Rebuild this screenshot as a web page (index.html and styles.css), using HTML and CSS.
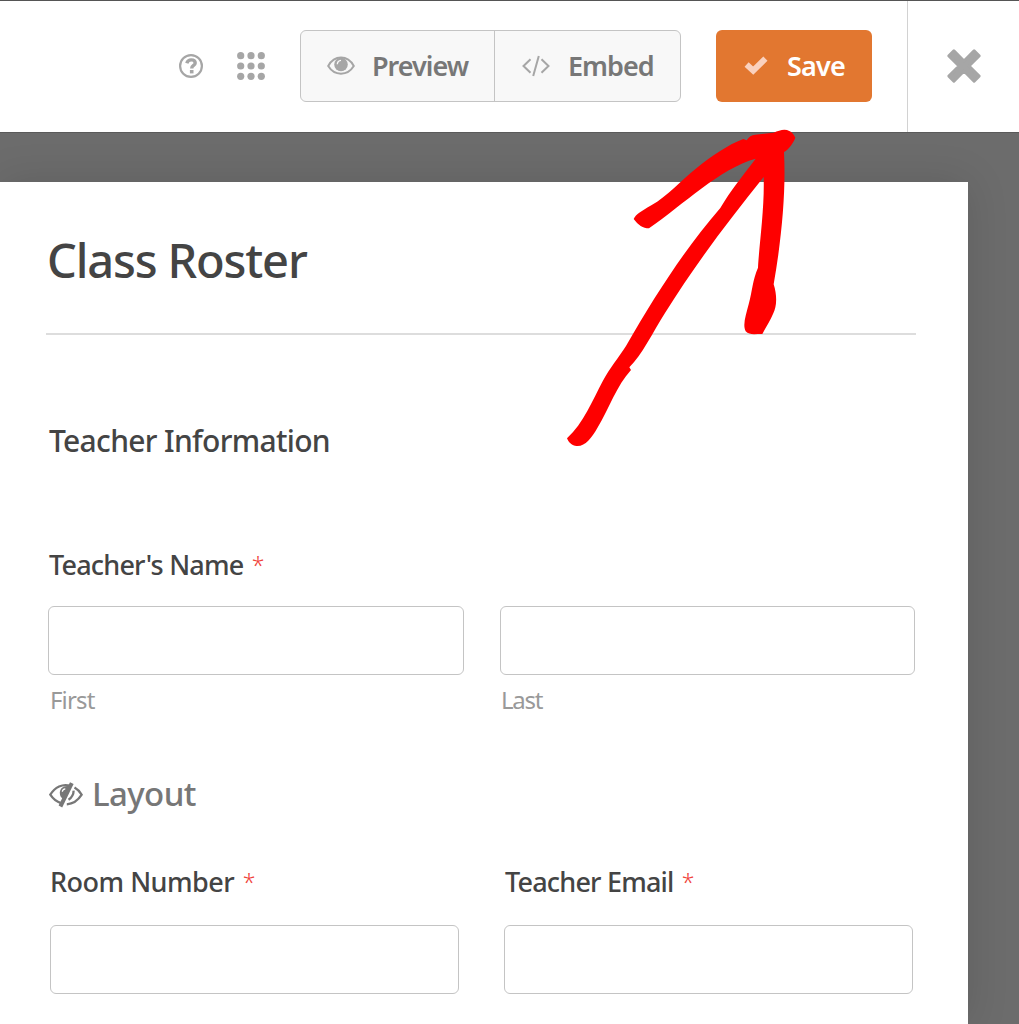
FILE: index.html
```html
<!DOCTYPE html>
<html lang="en">
<head>
<meta charset="utf-8">
<title>Class Roster</title>
<link rel="stylesheet" href="styles.css">
</head>
<body>
<header class="toolbar">
  <div class="actions">
    <svg class="icon-help" viewBox="0 0 26 26"><circle cx="13" cy="13" r="10.9" fill="none" stroke="#a6a6a6" stroke-width="2.200"/><path d="M8.800 10.300C9.500 8 11 6.900 13.200 6.900C15.800 6.900 17.200 8.100 17.200 10C17.200 12.600 13.700 12.400 13.700 15.400" fill="none" stroke="#a6a6a6" stroke-width="3.400"/><rect x="11.900" y="17" width="3.600" height="3.400" fill="#a6a6a6"/></svg>
    <svg class="icon-grid" viewBox="0 0 28 28" fill="#a6a6a6"><circle cx="3.700" cy="3.700" r="3.600"/><circle cx="14" cy="3.700" r="3.600"/><circle cx="24.300" cy="3.700" r="3.600"/><circle cx="3.700" cy="14" r="3.600"/><circle cx="14" cy="14" r="3.600"/><circle cx="24.300" cy="14" r="3.600"/><circle cx="3.700" cy="24.300" r="3.600"/><circle cx="14" cy="24.300" r="3.600"/><circle cx="24.300" cy="24.300" r="3.600"/></svg>
    <div class="group">
      <button class="btn preview"><svg class="icon-eye" viewBox="0 0 28 20"><path d="M1.200 10C7.500-1.200 20.500-1.200 26.800 10C20.500 20.200 7.500 20.200 1.200 10Z" fill="none" stroke="#a6a6a6" stroke-width="2"/><circle cx="14" cy="8.500" r="6.800" fill="#a6a6a6"/><path d="M10.300 8.200C10.500 6 11.800 4.600 14 4.400" fill="none" stroke="#f8f8f8" stroke-width="1.300"/></svg><span>Preview</span></button>
      <button class="btn embed"><svg class="icon-code" viewBox="0 0 28 22" fill="none" stroke="#a6a6a6" stroke-width="2"><path d="M8.500 4.200L1.500 11L8.500 17.800M19.500 4.200L26.500 11L19.500 17.800M16.800 1L11.200 21"/></svg><span>Embed</span></button>
    </div>
    <button class="save"><svg class="icon-check" viewBox="0 0 24 19"><path d="M2.600 8.500L9.200 14.600L21.400 2.700" fill="none" stroke="#fad1be" stroke-width="6"/></svg><span>Save</span></button>
  </div>
  <button class="close"><svg class="icon-close" viewBox="0 0 34 34"><path d="M1.900 6.900L6.900 1.900L17 12L27.100 1.900L32.100 6.900L22 17L32.100 27.100L27.100 32.100L17 22L6.900 32.100L1.900 27.100L12 17Z" fill="#a6a6a6" stroke="#a6a6a6" stroke-width="3" stroke-linejoin="round"/></svg></button>
</header>
<main class="form">
  <h1 class="title">Class Roster</h1>
  <h2 class="section">Teacher Information</h2>
  <div class="label name">Teacher's Name <span class="star">*</span></div>
  <div class="names">
    <div><div class="input"></div><div class="sub">First</div></div>
    <div><div class="input"></div><div class="sub last">Last</div></div>
  </div>
  <div class="layout"><svg class="icon-hidden" viewBox="0 0 34 26" fill="none" stroke="#777" stroke-width="2.300"><path d="M21 3.700C13.500 1.500 6 5 1.300 12.700C4 16.800 7.500 19.800 12 21.200M25.500 5.600C28.500 7.300 31 9.700 32.700 12.700C29 18.500 23.500 22 17.800 22.300M24.500 8.700C24.800 11.500 23 15.700 19.500 17.800"/><path d="M20.500 4.200C14.500 3 10.800 6.400 10.800 10.700C10.800 13.400 11.900 15.600 14 17Z" fill="#777" stroke="none"/><path d="M13.300 9.800C13.500 8 14.600 7 16.300 6.900" stroke="#fff" stroke-width="1.200"/><path d="M22.800 1.200L11.400 24.500" stroke-width="4"/></svg><span>Layout</span></div>
  <div class="columns">
    <div><div class="label room">Room Number <span class="star">*</span></div><div class="input"></div></div>
    <div><div class="label email">Teacher Email <span class="star">*</span></div><div class="input"></div></div>
  </div>
</main>
<svg class="arrow" viewBox="0 0 780 1020"><path fill="#fe0000" d="M251 297C258 282 274 274 304 256C356 225 391 183 441 143C486 108 532 75 580 57L590 61C597 50 604 45 616 44L671 38C688 31 704 25 718 33C728 37 732 46 736 53C729 70 717 88 702 96C708 211 696 350 671 493C683 530 679 563 670 580C661 601 649 620 637 642C613 642 598 646 587 634C577 615 588 584 596 553C607 513 608 479 624 443C627 378 644 266 641 171C533 305 435 435 345 579C309 636 275 706 238 742L243 750C200 797 178 864 142 924C124 955 105 980 80 978C66 978 56 967 51 955C100 911 129 838 158 784C181 741 204 716 228 678C315 526 408 382 511 264C540 214 577 169 617 116C511 145 400 253 297 325C279 325 264 315 251 297Z"/></svg>
</body>
</html>
```
FILE: styles.css
```css
* { box-sizing: border-box; }
body {
  margin: 0;
  height: 1024px;
  overflow: hidden;
  background: #6c6c6c;
  font-family: "Noto Sans", sans-serif;
  color: #444;
}
button { font: inherit; margin: 0; padding: 0; border: 0; background: none; }
svg { display: block; flex: none; }
.toolbar {
  display: flex;
  height: 133px;
  background: #fff;
  border-top: 1px solid #555;
  border-bottom: 1px solid #5a5a5a;
}
.actions {
  display: flex;
  align-items: center;
  width: 908px;
  padding: 0 0 1px 178px;
  border-right: 1px solid #d2d2d2;
}
.icon-help { width: 26px; height: 26px; }
.icon-grid { width: 28px; height: 28px; margin-left: 33px; }
.group {
  display: flex;
  width: 381px;
  height: 72px;
  margin: 0 0 1px 35px;
  border: 1.500px solid #c4c4c4;
  border-radius: 6px;
  background: #f8f8f8;
}
.btn {
  display: flex;
  align-items: center;
  font-size: 27px;
  font-weight: 600;
  line-height: 36px;
  letter-spacing: -1px;
  color: #777;
}
.preview { width: 194px; padding-left: 26px; border-right: 1px solid #c4c4c4; }
.icon-eye { width: 28px; height: 20px; margin-right: 17px; }
.embed { padding-left: 27px; }
.icon-code { width: 28px; height: 22px; margin-right: 18px; }
.save {
  display: flex;
  align-items: center;
  width: 156px;
  height: 72px;
  margin: 0 0 1px 35px;
  padding-left: 28px;
  border-radius: 6px;
  background: #e27730;
  color: #fff;
  font-size: 27px;
  font-weight: 600;
  letter-spacing: -.8px;
}
.icon-check { width: 24px; height: 19px; margin-right: 19px; }
.close { display: grid; place-items: center; flex: 1; padding-bottom: 1px; }
.icon-close { width: 34px; height: 34px; }
.form {
  width: 968px;
  height: 842px;
  margin-top: 49px;
  padding: 44px 52px 0 46px;
  background: #fff;
  box-shadow: 0 0 40px rgba(0, 0, 0, .12);
}
.title {
  height: 109px;
  margin: 0;
  padding-left: 1px;
  border-bottom: 2px solid #ddd;
  font-size: 47px;
  font-weight: 550;
  line-height: 69px;
  letter-spacing: -1.150px;
}
.section {
  height: 40px;
  margin: 86px 0 0 3px;
  font-size: 30px;
  font-weight: 550;
  line-height: 40px;
  letter-spacing: -.680px;
}
.label {
  height: 36px;
  font-size: 27px;
  font-weight: 550;
  line-height: 36px;
  letter-spacing: -.800px;
  white-space: nowrap;
}
.name { margin: 86px 0 0 3px; }
.room { letter-spacing: -.500px; }
.star { margin-left: 2px; color: #f0433a; font-size: 23px; font-weight: 300; vertical-align: 1px; line-height: 1; }
.names {
  display: grid;
  grid-template-columns: 416px 415px;
  column-gap: 36px;
  margin: 23px 0 0 2px;
}
.input { height: 69px; border: 1.500px solid #c4c4c4; border-radius: 6px; }
.names > :last-child .input { width: 414.500px; }
.sub { height: 32px; margin: 9px 0 0 2px; color: #999; font-size: 24px; line-height: 32px; letter-spacing: -.850px; }
.last { margin-left: 1px; letter-spacing: -1.300px; }
.layout {
  display: flex;
  align-items: center;
  height: 44px;
  margin: 56px 0 0 3px;
  color: #777;
  font-size: 33px;
  font-weight: 550;
  line-height: 44px;
  letter-spacing: -.600px;
}
.icon-hidden { width: 34px; height: 26px; margin: 2px 9px 0 0; }
.columns {
  display: grid;
  grid-template-columns: 409px 409px;
  column-gap: 45px;
  margin: 48px 0 0 4px;
}
.columns .input { margin-top: 25px; }
.email { padding-left: 1px; }
.arrow { position: absolute; left: 550px; top: 120px; width: 260px; height: 340px; }
```
